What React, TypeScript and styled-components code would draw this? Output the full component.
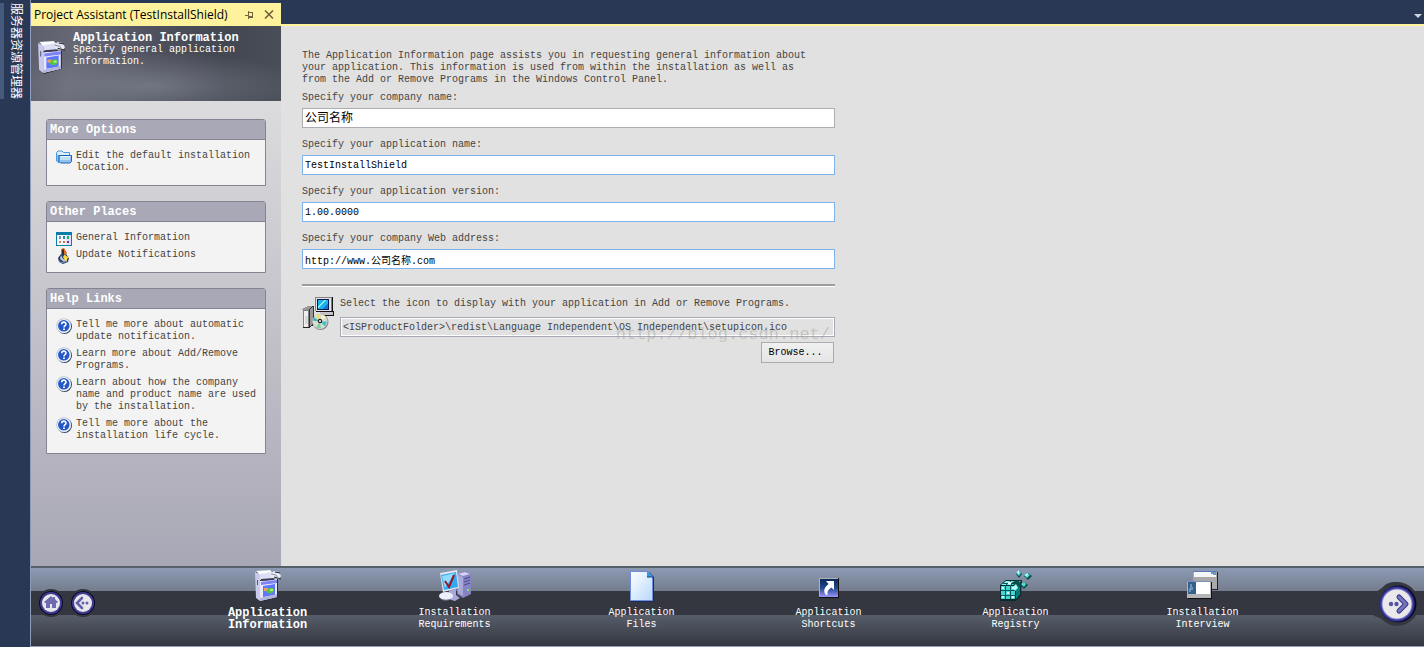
import React from "react";
import styled, { createGlobalStyle, css } from "styled-components";

const mono = `"Liberation Mono", "Noto Sans CJK SC", monospace`;

const GlobalStyle = createGlobalStyle`
  *, *::before, *::after { box-sizing: border-box; }
  body {
    margin: 0;
    background: #293955;
    font-family: ${mono};
    font-size: 10px;
    line-height: 12px;
    color: #444;
  }
  button, input { font: inherit; }
  svg { display: block; flex: none; }
`;

/* ---------- shell ---------- */

const Shell = styled.div`
  display: flex;
  min-height: 100vh;
`;

const Rail = styled.aside`
  display: flex;
  align-items: flex-start;
  width: 30px;
  flex: none;
  padding-top: 3px;
  background: #293955;
`;

const RailTab = styled.button`
  writing-mode: vertical-rl;
  text-orientation: sideways;
  width: 26px;
  padding: 0 0 0 4px;
  border: 0;
  border-left: 4px solid #465a7d;
  background: none;
  color: #fff;
  text-align: left;
  font-family: "Noto Sans CJK SC", sans-serif;
  font-size: 12px;
  line-height: 15px;
`;

const Workspace = styled.div`
  display: flex;
  flex-direction: column;
  flex: 1;
  min-width: 0;
  border-left: 1px solid #8e9bbc;
  border-bottom: 1px solid #8e9bbc;
`;

const TabStrip = styled.div`
  display: flex;
  align-items: flex-end;
  justify-content: space-between;
  height: 26px;
  padding-top: 3px;
  background: #293955;
  border-bottom: 2px solid #fff29d;
`;

const DocumentTab = styled.div`
  display: flex;
  align-items: center;
  width: 250px;
  height: 21px;
  padding: 2px 3px 0 3px;
  background: #fff29d;
  color: #000;
  font-family: "Open Sans", "Noto Sans", sans-serif;
  font-size: 12px;
  line-height: 16px;
  white-space: nowrap;
`;

const TabTitle = styled.span`
  flex: 1;
`;

const TabButton = styled.button`
  display: flex;
  align-items: center;
  justify-content: center;
  width: 19px;
  height: 16px;
  padding: 0;
  border: 0;
  background: none;
`;

const TabMenuButton = styled(TabButton)`
  width: 12px;
`;

const Body = styled.div`
  display: flex;
  flex: 1;
`;

/* ---------- sidebar ---------- */

const Sidebar = styled.aside`
  width: 250px;
  flex: none;
  background: linear-gradient(#e4e4e4, #a8a7b5);
`;

const PageHeader = styled.header`
  display: flex;
  gap: 8px;
  height: 75px;
  padding: 6px 8px 0 7px;
  color: #fff;
  background:
    radial-gradient(ellipse 150px 34px at 120px 60px, rgba(138, 142, 156, 0.6), rgba(138, 142, 156, 0) 100%),
    linear-gradient(100deg, #5d5f6c 0%, #666875 18%, #4e515d 48%, #434751 75%, #4b4f59 100%);

  svg { margin-top: 9px; }
`;

const PageTitle = styled.h1`
  margin: 0;
  font-size: 12px;
  line-height: 12px;
`;

const PageSubtitle = styled.p`
  margin: 0;
`;

const Panels = styled.div`
  display: flex;
  flex-direction: column;
  gap: 15px;
  padding: 18px 15px;
`;

const Panel = styled.section`
  border: 1px solid #848392;
  border-radius: 3px 3px 0 0;
  background: #f3f3f3;
`;

const PanelTitle = styled.h2`
  margin: 0;
  padding: 4px 3px 3px;
  height: 20px;
  border-bottom: 1px solid #848392;
  background: #a9a8b6;
  color: #fff;
  font-size: 12px;
  line-height: 12px;
`;

const LinkList = styled.ul`
  display: flex;
  flex-direction: column;
  gap: 4px;
  margin: 0;
  padding: 9px 7px 11px 9px;
  list-style: none;
`;

const PanelLink = styled.a`
  display: flex;
  gap: 4px;
  color: #444;
  text-decoration: none;

  svg { margin-bottom: -4px; }
  span { padding-top: 1px; }
`;

/* ---------- form ---------- */

const Content = styled.main`
  flex: 1;
  min-width: 0;
  padding: 24px 21px;
  background: #e1e1e1;
`;

const Form = styled.form`
  max-width: 533px;
`;

const Intro = styled.p`
  max-width: 510px;
  margin: 0 0 6px;
`;

const Field = styled.div`
  display: flex;
  flex-direction: column;
  gap: 4px;
  margin-bottom: 11px;
`;

const TextBox = styled.input<{ $active?: boolean; $large?: boolean }>`
  width: 100%;
  height: 20px;
  padding: 0 2px;
  border: 1px solid ${(p) => (p.$active ? "#7eb4ea" : "#abadb3")};
  outline: 0;
  background: #fff;
  color: #000;
  ${(p) => p.$large && css`padding-bottom: 2px; font-size: 12px;`}
`;

const ReadOnlyBox = styled(TextBox)`
  border-color: #a9a8b4;
  background: #e1e1e1;
  box-shadow: inset 0 0 0 1px #fff;
  color: #444;
`;

const Divider = styled.hr`
  height: 3px;
  margin: 15px 0 10px;
  border: 0;
  border-top: 2px solid #9d9d9d;
  background: #fff;
`;

const IconRow = styled.div`
  display: flex;
  gap: 6px;
`;

const IconPicker = styled.div`
  position: relative;
  display: flex;
  flex-direction: column;
  gap: 5px;
  flex: 1;

  label { padding: 1px 0 2px; }
`;

const Watermark = styled.span`
  position: absolute;
  top: 28px;
  right: 5px;
  color: rgba(150, 150, 140, 0.4);
  font-size: 17px;
  line-height: 20px;
  pointer-events: none;
`;

const BrowseButton = styled.button`
  align-self: flex-end;
  width: 73px;
  height: 21px;
  margin-right: 1px;
  padding: 1px 4px 0 0;
  border: 1px solid #acacac;
  background: linear-gradient(#f0f0f0, #e5e5e5);
  color: #000;
`;

/* ---------- navigation bar ---------- */

const NavBar = styled.nav`
  display: flex;
  height: 80px;
  border-top: 2px solid #566068;
  color: #fff;
  background: linear-gradient(
    #8c9ab3 0, #747d8d 23px,
    #343740 23px, #343740 47px,
    #565d69 47px, #343741 100%
  );
`;

const NavStart = styled.div`
  display: flex;
  gap: 4px;
  width: 143px;
  padding: 21px 0 0 6px;
`;

const NavEnd = styled.div`
  display: flex;
  justify-content: flex-end;
  width: 128px;
  padding: 14px 4px 0 0;
`;

const RoundButton = styled.button`
  align-self: flex-start;
  padding: 0;
  border: 0;
  background: none;
`;

const Steps = styled.ol`
  display: flex;
  flex: 1;
  margin: 0;
  padding: 0;
  list-style: none;
`;

const Step = styled.li`
  display: flex;
  justify-content: center;
  flex: 1;
`;

const StepLink = styled.a<{ $current?: boolean }>`
  display: flex;
  flex-direction: column;
  align-items: center;
  gap: 5px;
  padding-top: 2px;
  color: #fff;
  text-align: center;
  text-decoration: none;
  ${(p) => p.$current && css`font-size: 12px; font-weight: bold;`}

  span { max-width: 96px; }
`;

/* ---------- icons ---------- */

const BoxIcon = ({ width = 26, height = 32 }: { width?: number; height?: number }) => (
  <svg width={width} height={height} viewBox="0 0 26 32" aria-hidden="true">
    <path d="M1 2 14 0l5 3-1 5 5 1v18L6 32l-5-4z" fill="#2b2c38" />
    <path d="M0 2 5 4v27l-4-3z" fill="#c9caec" />
    <path d="M1 1 15 0l3 3-13 2z" fill="#fff" />
    <path d="M5 4 17 2v7L5 10z" fill="#dcdff6" />
    <path d="M2 10h1v5H2z" fill="#555a80" />
    <path d="m5 11 17-2v18L5 31z" fill="#e9eaff" />
    <path d="m6 9 13-1v2L6 11z" fill="#3a3c58" />
    <path d="m6 12 16-2v3L6 15z" fill="#7b83f5" />
    <path d="M8 16 20 14v11L8 27z" fill="#5f76ff" />
    <path d="M9 18h4v3H9z" fill="#f0a25a" />
    <path d="M12 20c2-3 7-3 7 0s-4 4-6 3-2-2-1-3z" fill="#52c643" />
    <path d="M15 19h3v2h-3z" fill="#b4f27a" />
    <path d="m5 28 17-4v3L5 31z" fill="#b3b5dc" />
    <path d="m15 4 4-3 5 1 2 4-2 3-7-1z" fill="#e8eaf4" />
    <path d="m19 7 7 2M20 2l5 1" stroke="#25272e" fill="none" />
    <path d="m16 4 5 1 2 3" stroke="#8f94ad" fill="none" />
  </svg>
);

const FolderIcon = () => (
  <svg width="16" height="16" viewBox="0 0 16 16" aria-hidden="true">
    <path d="M.5 5.500V3.500L2 2h4l1.500 1.500h6V6" fill="#d9ecfb" stroke="#4f9cd8" />
    <path d="M.5 5v7L3 14V6" fill="#8cc5f0" stroke="#4d98da" />
    <path d="M3 6.500h12.500v6L14 14H4.500L3 12.500z" fill="#8fc0ee" stroke="#1763b8" />
    <path d="M4 7.500h10.500" stroke="#e5f4ff" />
    <path d="M4 8h10v3H4z" fill="#c0dff7" />
  </svg>
);

const CalendarIcon = () => (
  <svg width="16" height="16" viewBox="0 0 16 16" shapeRendering="crispEdges" aria-hidden="true">
    <path d="M0 1h16v14H0z" fill="#087ea8" />
    <path d="M1 4h14v10H1z" fill="#f6f7ff" />
    <path d="M10 4h5v10h-5z" fill="#e2e1fa" />
    <path d="M3 5h2v3H3z" fill="#7b94ae" />
    <path d="M7 5h2v3H7z" fill="#168fa8" />
    <path d="M11 5h2v3h-2z" fill="#24ad55" />
    <path d="M3 10h2v2H3z" fill="#dc8260" />
    <path d="M7 10h2v2H7z" fill="#d36f3c" />
    <path d="M11 10h2v2h-2z" fill="#553a9c" />
  </svg>
);

const UpdateIcon = () => (
  <svg width="16" height="16" viewBox="0 0 16 16" aria-hidden="true">
    <path d="M5 1 8 0l3 5-2 3-4-2z" fill="#e46a24" />
    <path d="M6 2 8 1v5H6z" fill="#2c2e34" />
    <path d="M5 6 2 10l1 4 4 2 5-2 1-4-3-4z" fill="#293e68" />
    <path d="M5 7 4 11l4 3 3-2-4-1z" fill="#b9c9df" />
    <path d="m9 6 1 2 3 1-2 2v3l-3-3-1-2z" fill="#ffd83d" />
    <path d="M3 13c2 2 5 2 8 0" stroke="#7590bd" fill="none" />
  </svg>
);

const HelpIcon = () => (
  <svg width="16" height="16" viewBox="0 0 16 16" aria-hidden="true">
    <circle cx="8.500" cy="8.500" r="7.500" fill="#33405f" />
    <circle cx="7.700" cy="7.700" r="7.500" fill="#b9c5da" />
    <circle cx="8" cy="8" r="6.800" fill="#fff" />
    <circle cx="7.800" cy="7.800" r="5.800" fill="#2458c8" />
    <path d="M5.700 6.200C5.800 3.400 10 3.500 10 6c0 1.700-2 1.500-2 3.400" stroke="#fff" strokeWidth="1.600" fill="none" />
    <path d="M7.100 10.500h1.800V12H7.100z" fill="#fff" />
  </svg>
);

const SetupIcon = () => (
  <svg width="32" height="34" viewBox="0 0 32 34" shapeRendering="crispEdges" aria-hidden="true">
    <path d="M14 0h17v15H14z" fill="#111" />
    <path d="M13 0h17v14H13z" fill="#808080" />
    <path d="M14 1h15v13H14z" fill="#e4e4e4" />
    <path d="M15 2h12v11H15z" fill="#06185c" />
    <path d="M16 3h10v9H16z" fill="#1bb4e8" />
    <path d="M16 9 22 3h3l-9 8z" fill="#8fe9ff" />
    <path d="m21 12 5-6v6z" fill="#1675d2" />
    <path d="M18 15h13v4H18z" fill="#c4c4c4" />
    <path d="M18 18h13v1H18zM31 14h1v5h-1z" fill="#111" />
    <path d="M0 12 6 9h5l-4 4H0z" fill="#9a9a9a" />
    <path d="M7 12 10 9h2v19l-5 3z" fill="#333" />
    <path d="M8 13 10 10h1v17l-3 2z" fill="#9a9a9a" />
    <path d="M1 13h6v18H1z" fill="#808080" />
    <path d="M2 14h4v16H2z" fill="#efefef" />
    <path d="M3 19h3v8H3z" fill="#dadada" />
    <path d="M1 30h6v1H1z" fill="#222" />
    <g shapeRendering="auto">
      <circle cx="18.500" cy="25" r="8" fill="#8a8a8a" />
      <circle cx="18" cy="24.500" r="7.500" fill="#d9dbd4" />
      <path d="m18 24.500-4-6.500 4-1z" fill="#e9e36b" />
      <path d="m18 24.500 2-7 4 3z" fill="#f6f4b8" />
      <path d="M18 24.500h7l-2 5z" fill="#42bfc7" />
      <path d="m18 24.500-7-1 1-3z" fill="#33aab5" />
      <path d="m18 24.500-4 6 5 1z" fill="#7fd0a0" />
      <circle cx="18" cy="24" r="2.200" fill="#222" />
      <circle cx="18" cy="24" r="1" fill="#fff" />
    </g>
  </svg>
);

const RequirementsIcon = () => (
  <svg width="34" height="32" viewBox="0 0 34 32" aria-hidden="true">
    <path d="m20 4 8-3 5 3v20l-8 4-6-4z" fill="#8583c4" />
    <path d="m20 4 7-2 5 2-7 2z" fill="#d3d2f2" />
    <path d="m20 5 5 2v19l-5-3z" fill="#aaa9dc" />
    <path d="M26 9l6-2M26 12l6-2M26 15l6-2" stroke="#4e4d86" />
    <path d="M29 19h2v2h-2z" fill="#72ef55" />
    <path d="m2 3 17-3 2 18-16 4z" fill="#e3e5ef" />
    <path d="m3 5 15-3 2 15-14 3z" fill="#35a8f2" />
    <path d="m4 6 13-3-10 15z" fill="#90dcff" />
    <path d="m7 11 4 6 5-12" stroke="#9b1220" strokeWidth="2" fill="none" />
    <path d="m11 21 7-2v6l4 3-5 3-7-2z" fill="#a9a8db" />
    <ellipse cx="8" cy="26" rx="7" ry="4" fill="#eceefa" />
    <path d="M3 29c4 2 7 1 10 0" stroke="#7977a2" fill="none" />
  </svg>
);

const FileIcon = () => (
  <svg width="26" height="32" viewBox="0 0 26 32" aria-hidden="true">
    <defs>
      <linearGradient id="sheet" x1="0" y1="0" x2="1" y2="1">
        <stop offset="0" stopColor="#fff" />
        <stop offset="1" stopColor="#b8d8fb" />
      </linearGradient>
    </defs>
    <path d="M2 2h18l5 5v25H2z" fill="#1b2c5c" />
    <path d="M1.500 1.500h17l5 5v24h-22z" fill="url(#sheet)" stroke="#6f8ede" />
    <path d="M18 1v6h6z" fill="#2b9ee8" />
    <path d="M18 7h6" stroke="#173f83" />
  </svg>
);

const ShortcutIcon = () => (
  <svg width="20" height="32" viewBox="0 0 20 32" aria-hidden="true">
    <defs>
      <linearGradient id="tile" x1="0" y1="0" x2="0" y2="1">
        <stop offset="0" stopColor="#06285a" />
        <stop offset=".5" stopColor="#22488e" />
        <stop offset="1" stopColor="#9a95ff" />
      </linearGradient>
    </defs>
    <path d="M0 8h20v20H0z" fill="#111" />
    <path d="M0 8h19v19H0z" fill="#b0b0b0" />
    <path d="M1 9h18v18H1z" fill="url(#tile)" />
    <path d="M7 11h8v9l-2.500-2.500C9.500 19.500 8 21 8.500 25H7c-3-4-2-7 2.500-11z" fill="#fff" />
  </svg>
);

const RegistryIcon = () => (
  <svg width="32" height="32" viewBox="0 0 32 32" aria-hidden="true">
    <path d="m0 15 6-5h16l-1 15-5 6H0z" fill="#062c2d" />
    <path d="M1 16h14v13H1z" fill="#43d4d1" />
    <path d="m1 15 5-4h15l-5 4z" fill="#8df2ee" />
    <path d="m16 16 4-4v12l-4 5z" fill="#0a8585" />
    <path d="M5.500 15v14M10.500 15v14M1 20.500h15M1 25.500h15M3 13.500h15M11 11l-5 4M16 11l-5 4M16 20l4-4M16 25l4-5" stroke="#075b5b" fill="none" />
    <path d="M2 17h2v2H2zM7 22h2v2H7zM2 26h2v2H2zM12 17h2v2h-2zM12 26h2v2h-2zM8 12h3v2H8z" fill="#e0ffff" />
    <path d="m12 12 3 5 5-1-1-6z" fill="#064f50" />
    <path d="m13 17 3-3 2 4-3 3z" fill="#a4fffb" />
    <path d="m16 4 3-4 3 4-3 4zM24 6l4-3 4 3-4 4zM20 15l4-3 4 3-4 4z" fill="#064d4e" />
    <path d="m16 3 3-3 2 3-2 3zM24 5l3-2 3 2-3 3zM21 14l3-2 2 2-2 3z" fill="#53ded9" />
    <path d="m17 2 2-2v4zM25 5l3-2-1 3z" fill="#dff" />
  </svg>
);

const InterviewIcon = () => (
  <svg width="31" height="32" viewBox="0 0 31 32" shapeRendering="crispEdges" aria-hidden="true">
    <path d="M7 2h24v18H7z" fill="#202227" />
    <path d="M6 1h24v18H6z" fill="#a9a9a9" />
    <path d="M6 1h24v1H6z" fill="#5c7bb5" />
    <path d="M7 2h22v5H7z" fill="#f5f6f8" />
    <path d="M24 2h5v3h-3v-1h-2z" fill="#7296bd" />
    <path d="M1 12h24v17H1z" fill="#111" />
    <path d="M0 11h24v17H0z" fill="#b5b5b5" />
    <path d="M0 11h24v1H0z" fill="#7890bd" />
    <path d="M1 12h8v12H1z" fill="#356087" />
    <path d="M3 14h2v3h1v3H4v2H2v-4h1z" fill="#6c96b6" />
    <path d="M9 12h14v12H9z" fill="#fff" />
  </svg>
);

const HomeIcon = () => (
  <svg width="28" height="28" viewBox="0 0 28 28" aria-hidden="true">
    <circle cx="14" cy="14" r="14" fill="#343740" />
    <circle cx="14" cy="14" r="12" fill="#0a0a23" />
    <circle cx="14" cy="14" r="11" fill="#3e3d93" />
    <circle cx="14" cy="14" r="9" fill="#e8e8ec" />
    <path d="m14 7-7 6 1 1h1v5h4v-4h2v4h4v-5h1l1-1-3-3V8h-2v1z" fill="#6e6cae" />
  </svg>
);

const BackIcon = () => (
  <svg width="28" height="28" viewBox="0 0 28 28" aria-hidden="true">
    <circle cx="14" cy="14" r="14" fill="#343740" />
    <circle cx="14" cy="14" r="12" fill="#0a0a23" />
    <circle cx="14" cy="14" r="11" fill="#3e3d93" />
    <circle cx="14" cy="14" r="9" fill="#e8e8ec" />
    <path d="m13 9-5 5 5 5" stroke="#6260a8" strokeWidth="2.600" strokeLinecap="round" fill="none" />
    <circle cx="14" cy="14" r="1.500" fill="#6260a8" />
    <circle cx="18" cy="14" r="1.500" fill="#6260a8" />
  </svg>
);

const NextIcon = () => (
  <svg width="46" height="44" viewBox="0 0 46 44" aria-hidden="true">
    <path d="M0 10c5-1 8-4 11-7 8-5 20-4 27 3 10 10 10 23 0 32-7 7-19 8-27 2-3-3-6-5-11-6z" fill="#343740" />
    <circle cx="24" cy="22" r="18.500" fill="#0a0a28" />
    <circle cx="23" cy="22" r="17.500" fill="#35349a" />
    <circle cx="23" cy="22" r="15.500" fill="#8583c4" />
    <circle cx="23" cy="22" r="14.500" fill="#e9e9eb" />
    <path d="m25 15 7 7-7 7" stroke="#33328c" strokeWidth="5" strokeLinecap="round" strokeLinejoin="round" fill="none" />
    <path d="m25 15 7 7-7 7" stroke="#7775ba" strokeWidth="3" strokeLinecap="round" strokeLinejoin="round" fill="none" />
    <circle cx="17" cy="22" r="2.200" fill="#5553a4" />
    <circle cx="22.500" cy="22" r="2.200" fill="#5553a4" />
  </svg>
);

const PinIcon = () => (
  <svg width="10" height="8" viewBox="0 0 10 8" shapeRendering="crispEdges" aria-hidden="true">
    <path d="M0 4h3V0h1v1h4v6H4v1H3V5H0zM4 2v3h3V2z" fill="#75633d" fillRule="evenodd" />
  </svg>
);

const CloseIcon = () => (
  <svg width="10" height="9" viewBox="0 0 10 9" aria-hidden="true">
    <path d="m1 .5 8 8M9 .5l-8 8" stroke="#75633d" strokeWidth="1.600" />
  </svg>
);

const CaretIcon = () => (
  <svg width="8" height="4" viewBox="0 0 8 4" aria-hidden="true">
    <path d="M0 0h8L4 4z" fill="#ced4dd" />
  </svg>
);

/* ---------- data ---------- */

const panels = [
  {
    title: "More Options",
    links: [{ icon: FolderIcon, text: "Edit the default installation location." }],
  },
  {
    title: "Other Places",
    links: [
      { icon: CalendarIcon, text: "General Information" },
      { icon: UpdateIcon, text: "Update Notifications" },
    ],
  },
  {
    title: "Help Links",
    links: [
      { icon: HelpIcon, text: "Tell me more about automatic update notification." },
      { icon: HelpIcon, text: "Learn more about Add/Remove Programs." },
      { icon: HelpIcon, text: "Learn about how the company name and product name are used by the installation." },
      { icon: HelpIcon, text: "Tell me more about the installation life cycle." },
    ],
  },
];

const fields = [
  { id: "company", label: "Specify your company name:", value: "公司名称", large: true },
  { id: "application", label: "Specify your application name:", value: "TestInstallShield", active: true },
  { id: "version", label: "Specify your application version:", value: "1.00.0000", active: true },
  { id: "web", label: "Specify your company Web address:", value: "http://www.公司名称.com", active: true },
];

const steps = [
  { icon: BoxIcon, text: "Application Information", current: true },
  { icon: RequirementsIcon, text: "Installation Requirements" },
  { icon: FileIcon, text: "Application Files" },
  { icon: ShortcutIcon, text: "Application Shortcuts" },
  { icon: RegistryIcon, text: "Application Registry" },
  { icon: InterviewIcon, text: "Installation Interview" },
];

export default function App() {
  return (
    <>
      <GlobalStyle />
      <Shell>
        <Rail>
          <RailTab type="button">服务器资源管理器</RailTab>
        </Rail>
        <Workspace>
          <TabStrip>
            <DocumentTab>
              <TabTitle>Project Assistant (TestInstallShield)</TabTitle>
              <TabButton type="button" aria-label="Pin"><PinIcon /></TabButton>
              <TabButton type="button" aria-label="Close"><CloseIcon /></TabButton>
            </DocumentTab>
            <TabMenuButton type="button" aria-label="Open documents"><CaretIcon /></TabMenuButton>
          </TabStrip>
          <Body>
            <Sidebar>
              <PageHeader>
                <BoxIcon width={27} height={33} />
                <div>
                  <PageTitle>Application Information</PageTitle>
                  <PageSubtitle>Specify general application information.</PageSubtitle>
                </div>
              </PageHeader>
              <Panels>
                {panels.map((panel) => (
                  <Panel key={panel.title}>
                    <PanelTitle>{panel.title}</PanelTitle>
                    <LinkList>
                      {panel.links.map(({ icon: Icon, text }) => (
                        <li key={text}>
                          <PanelLink href="#">
                            <Icon />
                            <span>{text}</span>
                          </PanelLink>
                        </li>
                      ))}
                    </LinkList>
                  </Panel>
                ))}
              </Panels>
            </Sidebar>
            <Content>
              <Form>
                <Intro>
                  The Application Information page assists you in requesting general information about your
                  application. This information is used from within the installation as well as from the Add or
                  Remove Programs in the Windows Control Panel.
                </Intro>
                {fields.map((f) => (
                  <Field key={f.id}>
                    <label htmlFor={f.id}>{f.label}</label>
                    <TextBox id={f.id} defaultValue={f.value} $active={f.active} $large={f.large} />
                  </Field>
                ))}
                <Divider />
                <IconRow>
                  <SetupIcon />
                  <IconPicker>
                    <label htmlFor="icon">
                      Select the icon to display with your application in Add or Remove Programs.
                    </label>
                    <ReadOnlyBox
                      id="icon"
                      readOnly
                      defaultValue="<ISProductFolder>\redist\Language Independent\OS Independent\setupicon.ico"
                    />
                    <BrowseButton type="button">Browse...</BrowseButton>
                    <Watermark>http://blog.csdn.net/</Watermark>
                  </IconPicker>
                </IconRow>
              </Form>
            </Content>
          </Body>
          <NavBar>
            <NavStart>
              <RoundButton type="button" aria-label="Home"><HomeIcon /></RoundButton>
              <RoundButton type="button" aria-label="Back"><BackIcon /></RoundButton>
            </NavStart>
            <Steps>
              {steps.map(({ icon: Icon, text, current }) => (
                <Step key={text}>
                  <StepLink href="#" $current={current}>
                    <Icon />
                    <span>{text}</span>
                  </StepLink>
                </Step>
              ))}
            </Steps>
            <NavEnd>
              <RoundButton type="button" aria-label="Next"><NextIcon /></RoundButton>
            </NavEnd>
          </NavBar>
        </Workspace>
      </Shell>
    </>
  );
}
